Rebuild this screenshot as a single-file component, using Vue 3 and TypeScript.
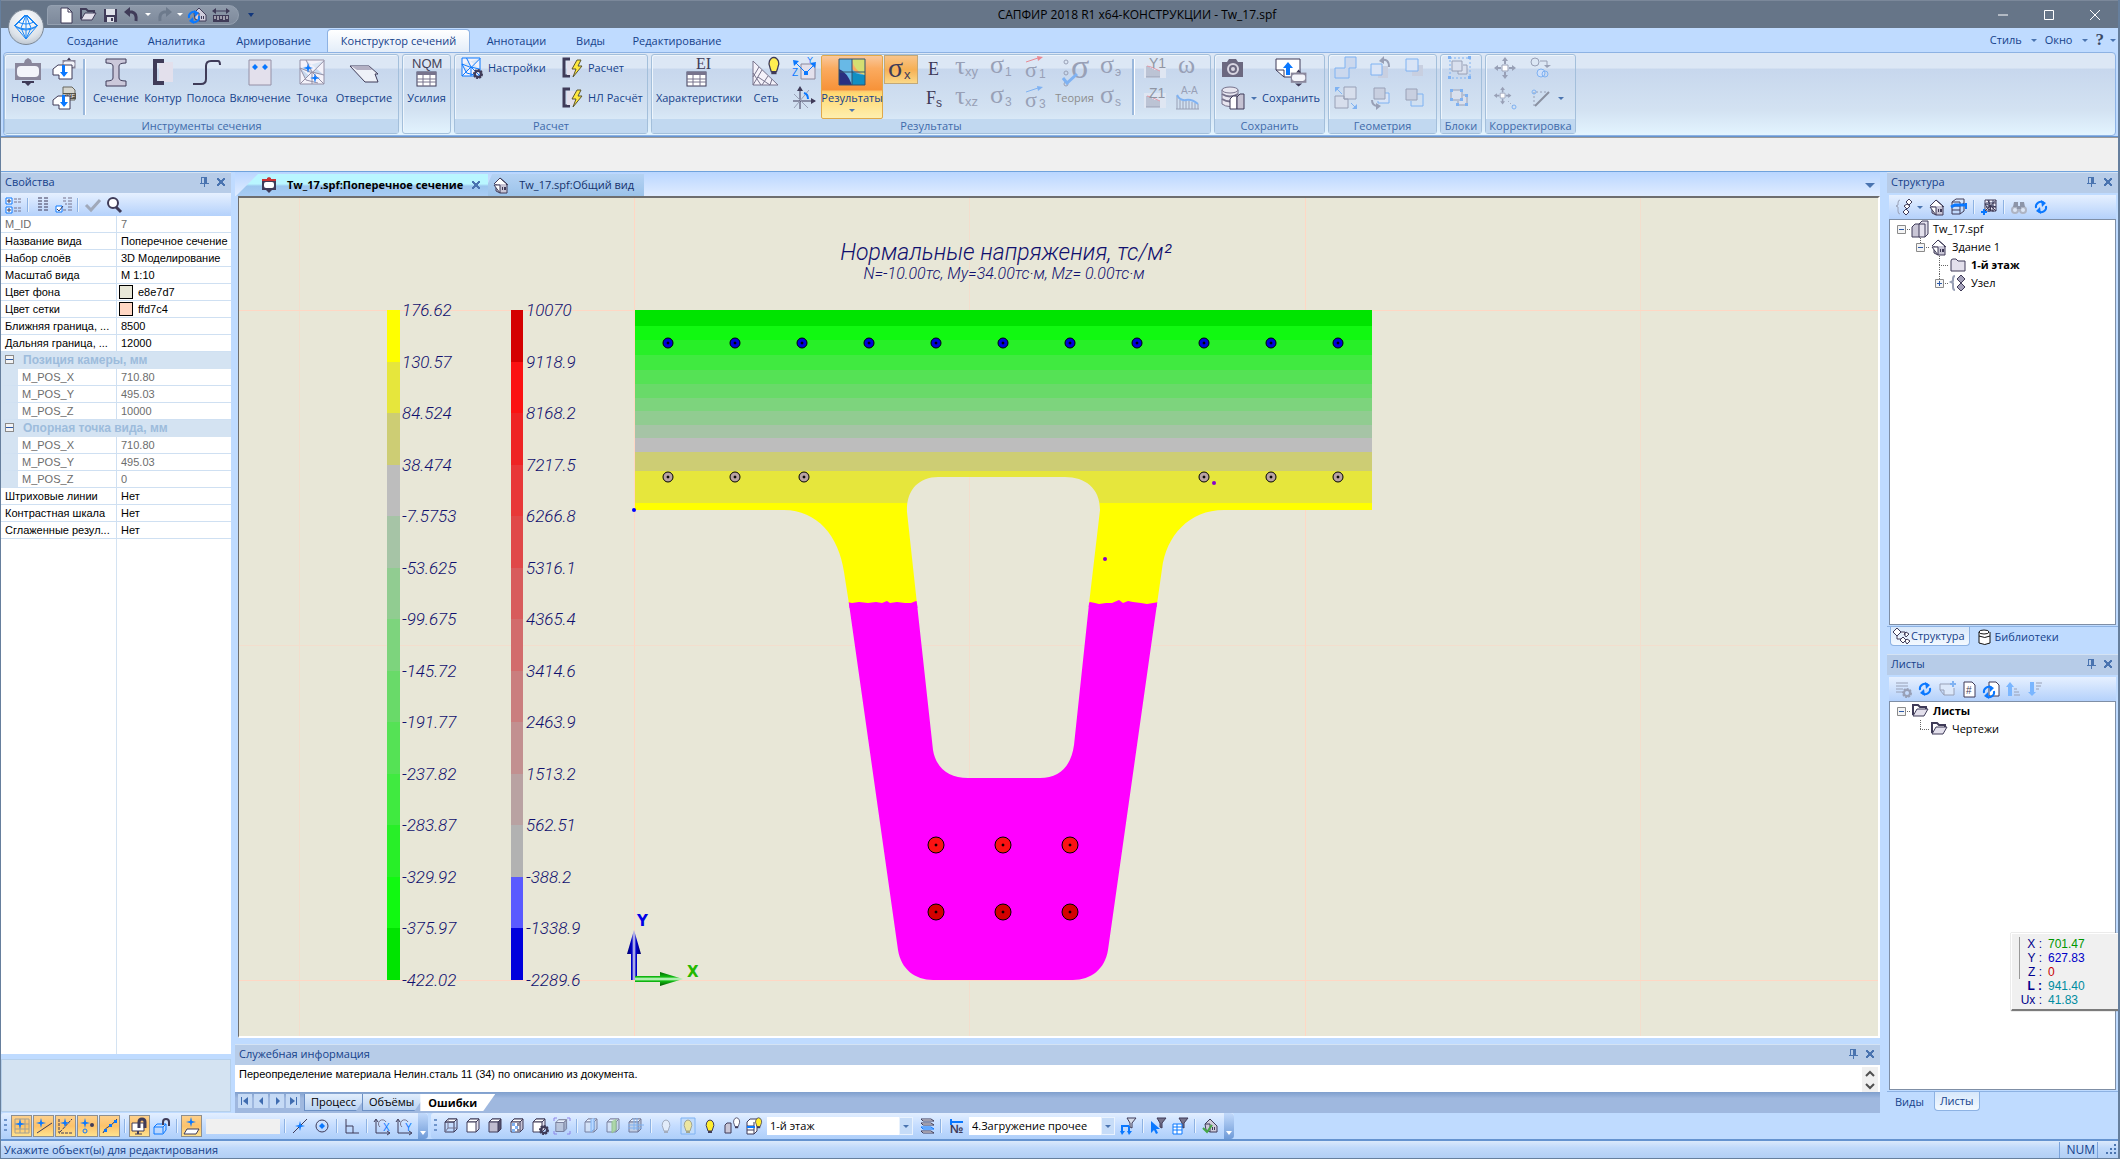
<script setup lang="ts">
import { h, ref } from 'vue'

const D = '#3f3b58'
const B = '#0a78ff'
const L = '#e3e0ec'
const G = '#98a0b6'
const LB = '#7fb2f2'

const stroke = (d: string, c = D, w = 1, fill = 'none', extra = '') =>
  `<path d="${d}" stroke="${c}" stroke-width="${w}" fill="${fill}" ${extra}/>`
const fillp = (d: string, c = D) => `<path d="${d}" fill="${c}"/>`
const txt = (s: string, x: number, y: number, size: number, c = D, extra = '') =>
  `<text x="${x}" y="${y}" font-size="${size}" fill="${c}" font-family="Liberation Sans, sans-serif" ${extra}>${s}</text>`
const serif = 'style="font-family:\'Liberation Serif\',serif"'

const gridTable = (x: number, y: number) =>
  `<rect x="${x}" y="${y}" width="19" height="14" fill="#fff" stroke="${D}"/><rect x="${x}" y="${y}" width="19" height="3" fill="#77738c"/>` +
  stroke(`M${x} ${y + 7}h19M${x} ${y + 10}h19M${x + 6} ${y + 3}v11M${x + 13} ${y + 3}v11`, '#77738c')
const bulb = (x: number, y: number, c: string, s = D) =>
  stroke(`M${x} ${y}a4 5 0 0 1 3 8l-1 3h-4l-1-3a4 5 0 0 1 3-8z`, s, 1, c) + fillp(`M${x - 2} ${y + 11}h4v2h-4z`, s)
const house = (x: number, y: number) =>
  stroke(`M${x} ${y + 6}l5-5 7 7v6h-7v0l-4-2z`, D, 1, '#cfccdb') + stroke(`M${x + 5} ${y + 14}v-8l-5 0`, D) + fillp(`M${x + 7} ${y + 9}h1v3h-1zM${x + 9} ${y + 9}h1v3h-1z`)
const refresh = (x: number, y: number, c = B) =>
  stroke(`M${x + 1} ${y + 7}a5 5 0 0 1 8-5M${x + 11} ${y + 5}a5 5 0 0 1-8 5`, c, 2) +
  fillp(`M${x + 6} ${y - 1}l5 3-4 4zM${x + 6} ${y + 13}l-5-3 4-4z`, c)
const cube = (front: string, side: string, c = D) =>
  stroke('M5 2h9v10l-3 3', c, 1, side) + stroke('M2 5l3-3h9l-3 3z', c, 1, '#fff') + stroke('M2 5h9v10h-9z', c, 1, front) + stroke('M11 5l3-3', c)
const gear = (x: number, y: number, c = D) =>
  `<circle cx="${x}" cy="${y}" r="3" fill="none" stroke="${c}" stroke-width="2"/><circle cx="${x}" cy="${y}" r="4" fill="none" stroke="${c}" stroke-width="2" stroke-dasharray="2 1"/>`
const spark = (x: number, y: number, c = B) => fillp(`M${x} ${y - 5}l1 4 4 1-4 1-1 4-1-4-4-1 4-1z`, c)
const funnel = (x: number, y: number, c: string, f: string) => stroke(`M${x} ${y}h9l-4 5v5l-2-1v-4z`, c, 1, f)
const bolt = (x: number, y: number) => stroke(`M${x + 5} ${y}h4l-3 6h4l-9 11 3-8h-4z`, '#5a5530', 1, '#ffe83d')
const contour = stroke('M10 3h-6v17h6', D, 3) + fillp('M7 5h9v14h-9z', L)
const folder = stroke('M2 13V3h5l2 2h6v2', D, 2) + stroke('M2 14l4-7h11l-4 7z', D, 1, L)
const mesh = (x: number, y: number, s: number, c: string) =>
  stroke(`M${x} ${y}h${s}v${s}h-${s}zM${x} ${y + s / 3}l${s / 2} ${s / 5} ${s / 2}-${s / 2}M${x} ${y + s}l${s / 2}-${s / 2} ${s / 2} ${s / 2}M${x + s / 4} ${y}l${s / 4} ${s / 2} ${s / 2} ${s / 8}M${x} ${y + s / 3}l${s / 4} ${s / 2} ${s / 2} ${s / 8}M${x + s / 2} ${y + s / 2}v${s / 2}`, c, 1, '#f4f2fa')
const section = (c = '#8a879c') => fillp('M3 6h26v17H3z', c) + `<rect x="5" y="9" width="22" height="11" rx="4" fill="#f3f4fa"/>`
const sigma = (s: string, c = G) =>
  txt('σ', 0, 17, 26, c, serif) + txt(s, 15, 20, 12, c)
const chart = (s: string) =>
  `<rect x="1" y="7" width="22" height="15" fill="#dfe6f2"/>` + stroke('M4 21V10M6 21V11M8 21v-9M10 21v-8M12 21v-7M14 21v-7M16 21v-6M3 21h14', G) + stroke('M4 10l4 1 9 4', '#e09aaa') + txt(s, 6, 12, 14, '#8f95a3')
const move = (x: number, y: number, c: string) =>
  stroke(`M${x - 3} ${y - 3}h6v6h-6z`, c, 1, '#fff') + fillp(`M${x} ${y - 11}l3 4h-2v3h-2v-3h-2zM${x} ${y + 11}l3-4h-2v-3h-2v3h-2zM${x - 11} ${y}l4-3v2h3v2h-3v2zM${x + 11} ${y}l-4-3v2h-3v2h3v2z`, c)

type Icon = [number, number, string]
const icons: Record<string, Icon> = {
  pin: [10, 10, fillp('M2 0h6v6h2v1H6v3H5V7H1V6h1zM3 1v5h2V1z', '#4a74b0')],
  doc: [18, 18, stroke('M4 2h7l4 4v11H4z', D, 1, '#fff') + stroke('M11 2v4h4', D)],
  folder: [18, 18, folder],
  save: [18, 18, fillp('M3 3h13v13H3z') + fillp('M5 3h9v6H5z', '#dfe2ea') + fillp('M6 11h7v5H6z', '#dfe2ea') + fillp('M10 12h2v3h-2z')],
  undo: [18, 18, stroke('M5 6h4q5 1 4 9', D, 3) + fillp('M1 6l6-5v10z')],
  redo: [18, 18, stroke('M13 6H9q-5 1-4 9', '#6d7a8c', 3) + fillp('M17 6l-6-5v10z', '#6d7a8c')],
  homeSync: [20, 18, house(7, 1) + refresh(1, 5)],
  ruler: [20, 18, fillp('M2 9h16v7H2z') + stroke('M4 10v3M7 10v4M10 10v3M13 10v4M16 10v3', '#fff') + stroke('M3 5h14', D) + fillp('M1 5l4-3v6zM19 5l-4-3v6z')],
  newSection: [32, 30, section() + fillp('M12 6l1-3 3-2 3 2 1 3z', '#8a879c') + fillp('M10 24h12v2h-3l-3 3-3-3h-3z')],
  importSec: [24, 24, `<g transform="translate(9 1) scale(.5)">${section()}${fillp('M12 6l4-5 4 5zM10 24h12l-6 5z')}</g>` + stroke('M1 13l5-4h14v14H7v-4H1z', D, 1, '#fff') + fillp('M10 9h3v7h3l-4 5-4-5h2z', B)],
  importDxf: [24, 24, stroke('M11 1h9l3 3v10H11z', '#66665e', 1, '#d5d5ce') + fillp('M11 7h13v6H11z', '#55554c') + txt('DXF', 11, 12, 6, '#fff') + stroke('M1 14l5-4h12v13H7v-4H1z', D, 1, '#fff') + fillp('M10 9h3v7h3l-4 5-4-5h2z', B)],
  beam: [32, 30, stroke('M6 2h20v4q-7 0-7 3v12q0 3 7 3v5H6v-5q7 0 7-3V9q0-3-7-3z', D, 1, '#cbc8da')],
  contourBig: [32, 30, fillp('M12 5h14v20H12z', L) + stroke('M17 4h-9v22h9', D, 4)],
  strip: [32, 30, stroke('M3 27h8q5 0 5-5V9q0-5 5-5h7q2 0 2 4', D, 2)],
  inclusion: [32, 30, stroke('M5 3h22v25H5z', '#9490a6', 1, L) + fillp('M11 7l3 3-3 3-3-3zM21 7l3 3-3 3-3-3z', B)],
  point: [32, 30, mesh(4, 3, 24, '#9490a6') + spark(12, 11) + spark(19, 21)],
  hole: [32, 30, stroke('M2 9h19l9 8h-3l3 8H17z', D, 1, '#eef1f8') + fillp('M3 9h18l3 4H9z', '#b3b0c3')],
  nqm: [32, 30, txt('NQM', 1, 11, 13, '#44445a') + gridTable(6, 15)],
  settings: [24, 24, mesh(2, 2, 18, B) + gear(18, 18)],
  calc: [24, 24, contour + bolt(12, 4)],
  ei: [32, 30, txt('EI', 13, 12, 16, D, serif) + gridTable(4, 15)],
  net: [32, 30, stroke('M3 4v24h25zM3 16l8 12M3 28l9-15M8 20l12 8M12 28l6-9M20 28l2-6M3 20l6-10', '#77738c', 1, '#f4f2fa') + `<g transform="translate(-6 -1) scale(1.3)">${bulb(23, 1, '#ffee50')}</g>`],
  axesYZ: [24, 24, stroke('M9 8h14v15H9z', '#8a879c', 1, L) + stroke('M14 17L4 7M14 17l9-9', B, 1) + fillp('M1 4l6 1-5 5zM24 6l-6 1 5 5zM12 15h4v4h-4z', B) + txt('Y', 15, 7, 9, B) + txt('Z', 0, 20, 10, B)],
  axesRot: [24, 24, stroke('M8 23V2M1 15h22', D, 1) + fillp('M8 0l3 5H5zM24 15l-5-3v6z') + stroke('M2 8l14 14M2 22L17 4', G, 1) + stroke('M16 13q0-5-4-6', B, 2)],
  results: [32, 30, '<path d="M3 2h13v10q2 3 13 6V28H3z" fill="#68b9e6"/><path d="M3 12q8 3 13 16H3z" fill="#2a2f80"/><path d="M16 14q3 3 13 4v10H16z" fill="#118fc2"/><path d="M16 2h13v16q-11-4-13-16z" fill="#d4df72"/>' + stroke('M3 2h26v26H3zM16 2v26M3 15h26', '#33506a')],
  sigmaX: [26, 24, txt('σ', 0, 19, 28, D, serif) + txt('x', 16, 21, 13)],
  E: [24, 24, txt('E', 6, 19, 18, D, serif)],
  Fs: [24, 24, txt('F', 4, 18, 18, D, serif) + txt('s', 14, 21, 12)],
  txy: [26, 24, txt('τ', 1, 18, 26, G, serif) + txt('xy', 11, 20, 13, G)],
  txz: [26, 24, txt('τ', 1, 18, 26, G, serif) + txt('xz', 11, 20, 13, G)],
  s1: [24, 24, sigma('1')],
  s3: [24, 24, sigma('3')],
  s1a: [24, 24, txt('σ', 1, 21, 22, G, serif) + txt('1', 15, 22, 12, G) + stroke('M2 6l12-4', '#e98a94') + fillp('M19 1l-6-1 1 5z', '#e98a94')],
  s3a: [24, 24, txt('σ', 1, 21, 22, G, serif) + txt('3', 15, 22, 12, G) + stroke('M2 6l12-4', LB) + fillp('M19 1l-6-1 1 5z', LB)],
  theory: [32, 30, txt('σ', 12, 21, 34, G, serif) + '<circle cx="7" cy="5" r="2" fill="none" stroke="#98a0b6"/><circle cx="7" cy="16" r="2" fill="none" stroke="#98a0b6"/><circle cx="7" cy="27" r="2" fill="none" stroke="#98a0b6"/>' + stroke('M4 21l4 5 10-9', LB, 3)],
  sE: [24, 24, sigma('э')],
  sS: [24, 24, sigma('s')],
  y1: [24, 24, chart('Y1')],
  z1: [24, 24, chart('Z1')],
  omega: [24, 24, txt('ω', 3, 17, 26, G, serif)],
  aa: [24, 24, txt('A-A', 6, 8, 10, G) + stroke('M2 23V10M5 23v-9M8 23v-8M11 23v-8M14 23v-8M17 23v-7M20 23v-6M23 23v-5M1 23h23', G) + stroke('M2 9q3 6 9 5t12 4', LB, 2)],
  camera: [24, 24, fillp('M2 6h5l2-3h7l2 3h5v15H2z', '#6b6880') + '<circle cx="13" cy="13" r="5" fill="none" stroke="#d8d6e2" stroke-width="2"/><circle cx="13" cy="13" r="2" fill="#d8d6e2"/>'],
  db: [26, 24, '<path d="M2 4v14q7 5 16 0V4" fill="#e8e6f0" stroke="#77738c"/><ellipse cx="10" cy="4" rx="8" ry="3" fill="#e8e6f0" stroke="#77738c"/>' + stroke('M2 8q8 5 16 0M2 13q8 5 16 0', '#77738c', 2) + stroke('M10 13l3-3h4v13h-7z', D, 1, '#fff') + stroke('M17 11l3-3h4v15h-7z', D, 1, '#c5c2d2')],
  saveBig: [32, 30, stroke('M1 2h24v18H9l-8-7zM1 13h8v7', D, 1, '#fff') + fillp('M13 5l5 6h-3v7h-4v-7H8z', B) + `<g transform="translate(14 12) scale(.6)">${section('#8a879c')}${fillp('M12 6l4-5 4 5zM10 24h12l-6 5z')}</g>`],
  union: [24, 24, stroke('M11 1h11v11h-7v10H1V12h10z', LB, 1, '#cbd8ee')],
  diff: [24, 24, stroke('M10 1h12v12H10zM1 10h9v3h4v9H1z', G, 1, '#d7deec') + stroke('M8 8L2 2M17 17l5 5', LB) + fillp('M1 1h5l-5 5zM23 23h-5l5-5z', LB)],
  rotateUp: [24, 24, fillp('M9 10h10v12H9z', '#c8cfe0') + stroke('M2 8h11v11H2z', LB, 1, '#d9e4f6') + stroke('M12 4q8-2 8 7', G, 2) + fillp('M10 5l5-5v8z', G)],
  rotateDown: [24, 24, stroke('M15 7h5v10H9v-2', LB, 1, '#d9e4f6') + stroke('M5 2h11v11H5z', G, 1, '#c8cfe0') + stroke('M3 14q0 6 6 6', G, 2) + fillp('M12 20l-5-3v7z', G)],
  front: [24, 24, fillp('M9 9h11v11H9z', '#c8cfe0') + stroke('M3 3h12v12H3z', LB, 1, '#d9e4f6')],
  back: [24, 24, stroke('M14 8h6v12H8v-5', LB) + stroke('M3 3h11v11H3z', G, 1, '#c8cfe0')],
  block: [24, 24, stroke('M2 2h20v20H2z', LB, 1, 'none', 'stroke-dasharray="2 2"') + stroke('M4 5h10v10H4zM15 9h4v9h-9v-3', G, 1, '#d9e0ee') + fillp('M0 0h3v3H0zM20 0h3v3h-3zM0 20h3v3H0zM20 20h3v3h-3z', LB)],
  unblock: [24, 24, stroke('M3 4h11v10H3zM15 9h4v10h-9v-4', G, 1, '#d9e0ee') + fillp('M2 3h3v3H2zM12 3h3v3h-3zM2 12h3v3H2zM17 8h3v3h-3zM8 17h3v3H8zM17 17h3v3h-3zM12 12h3v3h-3z', LB)],
  move: [24, 24, move(12, 12, G)],
  moveTo: [24, 24, `<g transform="scale(.8)">${move(12, 12, G)}</g>` + stroke('M15 15l5 5', G, 1, 'none', 'stroke-dasharray="1 2"') + '<circle cx="21" cy="21" r="2" fill="none" stroke="#7fb2f2"/>'],
  copyRot: [24, 24, '<circle cx="6" cy="6" r="4" fill="none" stroke="#98a0b6"/><circle cx="12" cy="17" r="4" fill="#cfe0fa" stroke="#7fb2f2"/><circle cx="16" cy="18" r="3" fill="none" stroke="#7fb2f2"/>' + stroke('M11 5h7v5', G) + fillp('M15 9h7l-4 3z', G)],
  angle: [24, 24, stroke('M5 20V6h12', G, 1, 'none', 'stroke-dasharray="2 2"') + stroke('M6 20L20 6', '#8a90a0', 2) + '<circle cx="5" cy="6" r="2" fill="none" stroke="#7fb2f2"/>'],
  tree: [18, 18, stroke('M1 2h6v6H1zM1 11h6v6H1z', B, 1, '#fff') + stroke('M2 5h4M4 3v4M2 14h4M4 12v4', D) + stroke('M9 3h8M9 6h8M9 12h8M9 15h8', '#77738c', 1, 'none', 'stroke-dasharray="3 1"')],
  list: [18, 18, stroke('M4 2h4M4 5h4M4 8h4M4 11h4M4 14h4M10 2h4M10 5h4M10 8h4M10 11h4M10 14h4', D)],
  checkList: [18, 18, stroke('M1 10h6v6H1z', B, 1, '#fff') + stroke('M2 13l2 2 4-5', D) + stroke('M8 2h3M8 5h3M10 8h2M8 14h3M13 2h4M13 5h4M13 8h4M13 11h4M13 14h4', '#77738c')],
  check: [18, 18, stroke('M2 9l5 5 9-10', '#a0a9ba', 3)],
  search: [18, 18, '<circle cx="8" cy="7" r="5" fill="#fff" stroke="#3f3b58" stroke-width="2"/>' + stroke('M11 11l5 5', D, 3)],
  struct: [18, 18, stroke('M6 2q-2 0-2 3v2l-2 1 2 1v4q0 3 2 3', G, 1) + stroke('M12 4l3-3 3 3-3 3zM9 14l3-3 3 3-3 3zM10 8l3-2 3 2-3 3z', D, 1, '#fff')],
  node: [18, 18, stroke('M6 2q-2 0-2 3v2l-2 1 2 1v4q0 3 2 3', G, 2) + stroke('M8 5l4-4 4 4-4 4zM8 13l4-4 4 4-4 4z', D, 1, '#a5a2ba')],
  house: [18, 18, `<path d="M4 8v7l4 2h7V9L8 2z" fill="#c9c6d6" stroke="${D}"/>` + stroke('M2 8l6-6 7 6M8 17V9H2z', D, 1, '#fff') + stroke('M8 2l8 7', D) + fillp('M10 11h1v3h-1zM12 11h2v3h-2z')],
  floors: [18, 18, stroke('M2 4l4-3h8v12l-4 3H2zM2 8h8M2 12h8M10 4v12M10 4H2M14 5l-4 3', D) + stroke('M1 9l4-2h11', B, 3) + fillp('M15 5h2v6h-2z', B)],
  meshAdd: [18, 18, mesh(5, 2, 11, D) + stroke('M6 5h10M6 9h10M9 2v12M13 2v12', D) + stroke('M1 14h6M4 11v6', B, 2)],
  binoc: [18, 18, '<circle cx="5" cy="12" r="4" fill="#aeb4c3"/><circle cx="13" cy="12" r="4" fill="#aeb4c3"/>' + fillp('M4 4h4v5H3zM10 4h4l1 5h-5zM7 8h4v3H7z', '#8d95a8') + '<circle cx="5" cy="12" r="2" fill="#dce6f6"/><circle cx="13" cy="12" r="2" fill="#dce6f6"/>'],
  refresh: [18, 18, refresh(3, 3)],
  building: [18, 18, stroke('M1 7l3-3h5v13H1z', D, 1, '#c9c6d6') + stroke('M8 4l3-3h6v13l-3 3H8z', D, 1, '#e3e0ec') + stroke('M14 17V4H8', D, 1)],
  floor: [18, 18, stroke('M2 15V5q0-2 2-2h3l2 2h7v10z', D, 1, L)],
  structTab: [18, 18, stroke('M1 5l4-4 4 4-4 4zM5 9v3h4M8 5h5v3M8 13l3-3 3 3-3 3zM13 14l2-2 3 2-3 3zM12 7l2-2 3 2-3 3z', D, 1, '#fff')],
  lib: [18, 18, '<path d="M3 4v11q6 3 11 0V4" fill="#fff" stroke="#111" stroke-width="1"/><ellipse cx="8" cy="4" rx="5" ry="2" fill="#fff" stroke="#111"/>' + stroke('M3 8q6 3 11 0', '#111', 1)],
  sheetCfg: [18, 18, stroke('M2 3h12M2 6h12M2 9h7M2 12h6', G, 1) + gear(13, 13, G)],
  sheetAdd: [18, 18, stroke('M13 4H2v6l4 5h10V8M2 10h4v5', G, 1, '#dce8fa') + stroke('M12 4h6M15 1v6', LB, 2)],
  sheetNum: [18, 18, stroke('M4 2h8l3 3v12H4z', D, 1, '#fff') + txt('#', 6, 14, 10)],
  sheetSync: [18, 18, stroke('M7 2h7l3 3v11H7z', D, 1, '#fff') + refresh(1, 6)],
  up: [18, 18, fillp('M6 2l4 5H8v9H4V7H2z', '#7ab6ff') + stroke('M10 9h3M10 12h5M10 15h6', G)],
  down: [18, 18, fillp('M6 16l4-4H8V2H4v10H2z', '#7ab6ff') + stroke('M10 3h6M10 6h5M10 9h3', G)],
  snapGrid: [18, 18, stroke('M2 2h14v14H2zM7 2v14M12 2v14M2 7h14M2 12h14', '#a29f92') + spark(7, 7)],
  snapLine: [18, 18, stroke('M2 16L17 6', D) + spark(6, 6)],
  snapMid: [18, 18, stroke('M2 2v14h14M3 15L15 2', D, 1, 'none', 'stroke-dasharray="3 1"') + spark(8, 6)],
  snapPt: [18, 18, spark(6, 6) + '<circle cx="6" cy="14" r="2" fill="none" stroke="#0a78ff"/><circle cx="13" cy="8" r="2" fill="#3f3b58"/>'],
  snapCurve: [18, 18, stroke('M2 16q2-5 5-6t9-8', D) + fillp('M3 12h3v3H3zM8 7h3v3H8zM13 3h3v3h-3z', B)],
  magnetMon: [18, 18, stroke('M1 6h12v8H1zM4 17h7', D, 1, '#fff') + stroke('M8 11V5q0-3 3-3t3 3v6', D, 3) + fillp('M6 14h2v3H6z')],
  magnetBox: [18, 18, stroke('M1 10l3-3h9v6l-3 4H1zM1 10h9v6M10 10l3-3', B) + stroke('M10 8V5q0-3 3-3t3 3v4', D, 2)],
  plane: [18, 18, stroke('M4 12h12l-3 5H1z', D, 1, '#fff') + spark(8, 5)],
  slash: [18, 18, stroke('M2 16L16 2', D) + spark(9, 9)],
  circle: [18, 18, `<circle cx="9" cy="9" r="6" fill="none" stroke="${D}"/>` + fillp('M9 6l3 3-3 3-3-3z', B)],
  ortho: [18, 18, stroke('M3 2v14h13M3 9h7v7', D)],
  rotX: [18, 18, stroke('M3 3v13h13M1 5l2-3 2 3M14 14l3 2-3 2', D) + stroke('M7 10a4 4 0 1 1 6-5', '#77738c', 1) + txt('X', 10, 14, 10, B)],
  rotY: [18, 18, stroke('M3 3v13h13M1 5l2-3 2 3M14 14l3 2-3 2', D) + stroke('M7 10a4 4 0 1 1 6-5', '#77738c', 1) + txt('Y', 10, 14, 10, B)],
  cubeWire: [18, 18, cube('none', 'none') + stroke('M5 2v9h9M5 11l-3 4', '#77738c')],
  cubeWhite: [18, 18, cube('#fff', '#e3e0ec')],
  cubeDark: [18, 18, cube('#c0bdcf', '#56526c')],
  cubeTex: [18, 18, cube('#fff', '#c8c5d6') + fillp('M3 6h3v3H3zM6 9h3v3H6zM3 12h3v3H3z', LB) + fillp('M8 6h3v3H8zM8 12h3v3H8z', '#8a8799')],
  cubeGear: [18, 18, cube('#fff', '#e3e0ec') + gear(13, 13)],
  cubeSel: [18, 18, `<g opacity=".6" transform="translate(1 1) scale(.9)">${cube('#b4b7c6', '#8d93a5')}</g>` + stroke('M1 4V1h3M14 1h3v3M17 14v3h-3M4 17H1v-3', '#8c84e8')],
  cutB: [18, 18, `<g opacity=".55">${cube('#dfe6f2', '#c8cfdd')}</g>` + stroke('M8 2v13l3-3V1', LB, 1, '#b9d8ff')],
  cutG: [18, 18, `<g opacity=".55">${cube('#dfe6f2', '#c8cfdd')}</g>` + stroke('M7 4v12l4-3V2', '#93bf93', 1, '#add6a9')],
  cutGrid: [18, 18, `<g opacity=".6">${cube('#c2c8d6', '#a5adbd')}</g>` + stroke('M1 8h16M1 11h14M7 1v12M10 1v12', LB)],
  bulbOff: [18, 18, bulb(9, 3, '#e2ecfa', '#a3adbf')],
  bulbBox: [18, 18, stroke('M2 1h14v16H2z', LB, 1, '#c2dcfb') + bulb(9, 3, '#ece6a0', '#a3a68f')],
  bulbOn: [18, 18, bulb(9, 3, '#ffee30')],
  bulbBld: [18, 18, stroke('M2 8l2-2h4v10H2z', D, 1, '#c9c6d6') + `<g transform="translate(4 0) scale(.8)">${bulb(12, 1, '#fff')}</g>`],
  bulbFl: [18, 18, stroke('M2 5l3-3h7v12l-3 3H2zM2 9h7M2 13h7M9 5v12', D, 1, '#fff') + stroke('M2 10h8', B, 2) + `<g transform="translate(4 0) scale(.8)">${bulb(12, 1, '#ffee30')}</g>`],
  layers: [18, 18, stroke('M4 2h10l3 2H6zM4 6h10l3 2H6zM4 14h10l3 2H6z', D, 1, '#fff') + stroke('M4 10h10l3 2H6z', B, 1, '#b9d8ff')],
  loadNo: [18, 18, txt('№', 3, 16, 12, D, 'font-weight="700"') + stroke('M3 5h13M4 2v6', B, 2)],
  filterLoad: [18, 18, funnel(8, 1, D, '#d5dbe8') + stroke('M3 8v8M10 9v7M3 9h7', B, 2) + fillp('M1 14h5l-3 4zM8 14h5l-3 4z', B)],
  filterSel: [18, 18, funnel(8, 1, D, '#77738c') + fillp('M2 4v12l3-3 2 4 2-1-2-4h4z', B)],
  filterTab: [18, 18, funnel(8, 1, D, '#77738c') + stroke('M2 7h9v10H2zM2 10h9M2 13h9M6 7v10', B, 1, '#fff')],
  houseCheck: [18, 18, house(4, 1) + stroke('M2 11l4 4 5-7', '#45a845', 2)],
  tabSec: [18, 18, fillp('M2 4h14v10H2z') + '<rect x="4" y="6" width="10" height="6" rx="2" fill="#fff"/>' + stroke('M2 4h14', '#c33', 2) + fillp('M7 2l2-1 2 1v2H7z', '#c33') + fillp('M6 14h6l-3 3z')],
}
const Ico = (p: { n: string }) => {
  const [w, hh, m] = icons[p.n]
  return h('svg', { width: w, height: hh, viewBox: `0 0 ${w} ${hh}`, 'aria-hidden': 'true', innerHTML: m })
}
Ico.props = ['n']

type Item = { i: string; t?: string; arrow?: boolean; on?: boolean }
type Col = { k: 'big' | 'pair' | 'drop' | 'rows' | 'sep' | 'split'; w: number; items: Item[]; off?: boolean }
const big = (w: number, i: string, t: string, off = false): Col => ({ k: 'big', w, items: [{ i, t }], off })
const pair = (w: number, a: string, b?: string): Col => ({ k: 'pair', w, items: b ? [{ i: a }, { i: b }] : [{ i: a }] })
const sep = (w: number): Col => ({ k: 'sep', w, items: [] })
const groups: { t: string; w: number; cols: Col[] }[] = [
  { t: 'Инструменты сечения', w: 395, cols: [big(46, 'newSection', 'Новое'), pair(26, 'importSec', 'importDxf'), sep(15), big(48, 'beam', 'Сечение'), big(46, 'contourBig', 'Контур'), big(40, 'strip', 'Полоса'), big(68, 'inclusion', 'Включение'), big(36, 'point', 'Точка'), big(68, 'hole', 'Отверстие')] },
  { t: '', w: 49, cols: [big(47, 'nqm', 'Усилия')] },
  { t: 'Расчет', w: 194, cols: [{ k: 'rows', w: 100, items: [{ i: 'settings', t: 'Настройки' }] }, { k: 'rows', w: 92, items: [{ i: 'calc', t: 'Расчет' }, { i: 'calc', t: 'НЛ Расчёт' }] }] },
  { t: 'Результаты', w: 560, cols: [big(94, 'ei', 'Характеристики'), big(40, 'net', 'Сеть'), pair(35, 'axesYZ', 'axesRot'), { k: 'split', w: 62, items: [{ i: 'results', t: 'Результаты' }] }, { k: 'pair', w: 35, items: [{ i: 'sigmaX', on: true }] }, pair(32, 'E', 'Fs'), pair(34, 'txy', 'txz'), pair(35, 's1', 's3'), pair(34, 's1a', 's3a'), big(43, 'theory', 'Теория', true), pair(31, 'sE', 'sS'), sep(12), pair(31, 'y1', 'z1'), pair(34, 'omega', 'aa')] },
  { t: 'Сохранить', w: 111, cols: [{ k: 'drop', w: 44, items: [{ i: 'camera' }, { i: 'db', arrow: true }] }, big(64, 'saveBig', 'Сохранить')] },
  { t: 'Геометрия', w: 109, cols: [pair(34, 'union', 'diff'), pair(35, 'rotateUp', 'rotateDown'), pair(34, 'front', 'back')] },
  { t: 'Блоки', w: 42, cols: [pair(38, 'block', 'unblock')] },
  { t: 'Корректировка', w: 91, cols: [pair(38, 'move', 'moveTo'), { k: 'drop', w: 46, items: [{ i: 'copyRot' }, { i: 'angle', arrow: true }] }] },
]
const tabs = [
  { t: 'Создание', w: 81 }, { t: 'Аналитика', w: 87 }, { t: 'Армирование', w: 107 }, { t: 'Конструктор сечений', w: 143 },
  { t: 'Аннотации', w: 93 }, { t: 'Виды', w: 55 }, { t: 'Редактирование', w: 118 },
]
const activeTab = ref(3)

type Prop = { n: string; v?: string; c?: string; ro?: boolean; group?: boolean; child?: boolean }
const props: Prop[] = [
  { n: 'M_ID', v: '7', ro: true }, { n: 'Название вида', v: 'Поперечное сечение' }, { n: 'Набор слоёв', v: '3D Моделирование' },
  { n: 'Масштаб вида', v: 'M 1:10' }, { n: 'Цвет фона', v: 'e8e7d7', c: '#e8e7d7' }, { n: 'Цвет сетки', v: 'ffd7c4', c: '#ffd7c4' },
  { n: 'Ближняя граница, ...', v: '8500' }, { n: 'Дальняя граница, ...', v: '12000' },
  { n: 'Позиция камеры, мм', group: true }, { n: 'M_POS_X', v: '710.80', ro: true, child: true }, { n: 'M_POS_Y', v: '495.03', ro: true, child: true }, { n: 'M_POS_Z', v: '10000', ro: true, child: true },
  { n: 'Опорная точка вида, мм', group: true }, { n: 'M_POS_X', v: '710.80', ro: true, child: true }, { n: 'M_POS_Y', v: '495.03', ro: true, child: true }, { n: 'M_POS_Z', v: '0', ro: true, child: true },
  { n: 'Штриховые линии', v: 'Нет' }, { n: 'Контрастная шкала', v: 'Нет' }, { n: 'Сглаженные резул...', v: 'Нет' },
]

const greens = ['#ffff00', '#e6e63c', '#cdcd74', '#bdbdbd', '#a6c4a6', '#91cc91', '#7dd47d', '#69da69', '#55e255', '#40ea40', '#28ef28', '#11f911', '#00e400']
const reds = ['#d40000', '#fb1212', '#ee2424', '#e83838', '#e04848', '#d85c5c', '#d26c6c', '#ca7e7e', '#c29090', '#b9a2a2', '#b2b2b2', '#5a5aff', '#0000dc']
const legends = [
  { x: 148, w: 13, tx: 163, colors: greens, labels: ['176.62', '130.57', '84.524', '38.474', '-7.5753', '-53.625', '-99.675', '-145.72', '-191.77', '-237.82', '-283.87', '-329.92', '-375.97', '-422.02'] },
  { x: 272, w: 12, tx: 287, colors: reds, labels: ['10070', '9118.9', '8168.2', '7217.5', '6266.8', '5316.1', '4365.4', '3414.6', '2463.9', '1513.2', '562.51', '-388.2', '-1338.9', '-2289.6'] },
]
const stepY = (k: number) => Math.round(112 + (k * 670) / 13)
const bandEdges = [112, 128, 142, 157, 172, 186, 200, 213, 227, 240, 254, 273, 305, 406]
const bands = bandEdges.slice(0, -1).map((y, k) => ({ y, h: bandEdges[k + 1] - y, c: greens[12 - k] }))
const topBars = Array.from({ length: 11 }, (_, k) => 429 + k * 67)
const lowBars = [429, 496, 565, 965, 1032, 1099]
const redBars = [697, 764, 831]

const coords = [
  { k: 'X', v: '701.47', c: '#009600' }, { k: 'Y', v: '627.83', c: '#0000c8' }, { k: 'Z', v: '0', c: '#c80000' },
  { k: 'L', v: '941.40', c: '#008ca0', b: true }, { k: 'Ux', v: '41.83', c: '#008ca0' },
]
const floorSel = ref('1-й этаж')
const loadSel = ref('4.Загружение прочее')
const bar1 = ['+snapGrid', '+snapLine', '+snapMid', '+snapPt', '+snapCurve', '|', '+magnetMon', 'magnetBox', '|', '+plane', '_', '|', 'slash', 'circle', '|', 'ortho', '|', 'rotX', 'rotY']
const bar2 = ['cubeWire', 'cubeWhite', 'cubeDark', 'cubeTex', 'cubeGear', 'cubeSel', '|', 'cutB', 'cutG', 'cutGrid', '|', 'bulbOff', 'bulbBox', 'bulbOn', 'bulbBld', 'bulbFl']
const structTree = [
  { l: 0, b: '-', i: 'building', t: 'Tw_17.spf' }, { l: 1, b: '-', i: 'house', t: 'Здание 1' },
  { l: 2, b: '', i: 'floor', t: '1-й этаж', bold: true, more: true }, { l: 2, b: '+', i: 'node', t: 'Узел' },
]
const sheetTree = [{ l: 0, b: '-', i: 'folder', t: 'Листы', bold: true }, { l: 1, b: '', i: 'folder', t: 'Чертежи' }]
</script>

<template>
  <div class="app">
    <header class="title">
      <button class="orb" aria-label="Меню">
        <svg width="26" height="28" viewBox="0 0 26 28" fill="none" stroke="#1a86f5" stroke-width="1">
          <path d="M13 2L2 13l11 13 11-13zM2 13q11 6 22 0M5 9q8 4 16 0M13 2L8 15l5 11 5-11zM13 2v24M3 14q10 6 20 0M12 2L1 13M14 2l11 11" />
        </svg>
      </button>
      <div class="qat">
        <button aria-label="Новый"><Ico n="doc" /></button>
        <button aria-label="Открыть"><Ico n="folder" /></button>
        <button aria-label="Сохранить"><Ico n="save" /></button>
        <button aria-label="Отменить"><Ico n="undo" /></button>
        <i class="tri pale" />
        <button aria-label="Вернуть"><Ico n="redo" /></button>
        <i class="tri pale" />
        <button aria-label="Обновить"><Ico n="homeSync" /></button>
        <button aria-label="Измерить"><Ico n="ruler" /></button>
      </div>
      <button class="more" aria-label="Настройка панели"><i class="tri" /></button>
      <h1>САПФИР 2018 R1 x64-КОНСТРУКЦИИ - Tw_17.spf</h1>
      <div class="wctl">
        <button aria-label="Свернуть"><svg width="10" height="10"><path d="M0 5h10" stroke="#fff" /></svg></button>
        <button aria-label="Развернуть"><svg width="10" height="10"><path d="M.5 .5h9v9h-9z" stroke="#fff" fill="none" /></svg></button>
        <button aria-label="Закрыть"><svg width="10" height="10"><path d="M0 0l10 10M10 0L0 10" stroke="#fff" /></svg></button>
      </div>
    </header>

    <nav class="tabs">
      <button v-for="(t, k) in tabs" :key="t.t" class="tab" :class="{ on: k === activeTab }" :style="{ width: t.w + 'px' }" @click="activeTab = k">{{ t.t }}</button>
      <span class="grow" />
      <button class="menu">Стиль <i class="tri" /></button>
      <button class="menu">Окно <i class="tri" /></button>
      <button class="menu help">? <i class="tri" /></button>
    </nav>

    <div class="ribbonwrap">
      <div class="ribbon">
        <section v-for="(g, gi) in groups" :key="gi" class="group" :style="{ width: g.w + 'px' }">
          <div class="gbody">
            <template v-for="(c, ci) in g.cols" :key="ci">
              <i v-if="c.k === 'sep'" class="vsep" :style="{ width: c.w + 'px' }" />
              <button v-else-if="c.k === 'big'" class="big" :class="{ off: c.off }" :style="{ width: c.w + 'px' }">
                <Ico :n="c.items[0].i" /><span>{{ c.items[0].t }}</span>
              </button>
              <button v-else-if="c.k === 'split'" class="big split" :style="{ width: c.w + 'px' }">
                <Ico :n="c.items[0].i" /><span>{{ c.items[0].t }}</span><i class="tri" />
              </button>
              <div v-else class="col" :class="c.k" :style="{ width: c.w + 'px' }">
                <button v-for="(it, k) in c.items" :key="k" :class="{ on: it.on }" :aria-label="it.t || it.i">
                  <Ico :n="it.i" /><span v-if="it.t">{{ it.t }}</span><i v-if="it.arrow" class="tri" />
                </button>
              </div>
            </template>
          </div>
          <footer v-if="g.t">{{ g.t }}</footer>
        </section>
      </div>
    </div>
    <div class="blank" />

    <main class="work">
      <aside class="left">
        <div class="phead"><h2>Свойства</h2><Ico n="pin" class="pin" /><span class="cls" /></div>
        <div class="ptools props">
          <button aria-label="Дерево"><Ico n="tree" /></button><i class="bsep" />
          <button aria-label="Список"><Ico n="list" /></button><button aria-label="Выбор"><Ico n="checkList" /></button><i class="bsep" />
          <button aria-label="Применить"><Ico n="check" /></button><button aria-label="Найти"><Ico n="search" /></button>
        </div>
        <div class="plist">
          <table>
            <colgroup><col class="c1" /><col /></colgroup>
            <tbody>
              <tr v-for="(p, k) in props" :key="k" :class="{ ro: p.ro, grp: p.group, child: p.child }">
                <th v-if="p.group" colspan="2"><i class="box" />{{ p.n }}</th>
                <template v-else>
                  <td>{{ p.n }}</td>
                  <td><i v-if="p.c" class="sw" :style="{ background: p.c }" />{{ p.v }}</td>
                </template>
              </tr>
            </tbody>
          </table>
        </div>
        <div class="desc" />
      </aside>

      <section class="center">
        <div class="dtabs">
          <button class="dtab on"><Ico n="tabSec" /><span>Tw_17.spf:Поперечное сечение</span><i class="cls" /></button>
          <button class="dtab"><Ico n="house" /><span>Tw_17.spf:Общий вид</span></button>
          <span class="grow" /><i class="tri wide" />
        </div>
        <div class="canvas">
          <svg class="plot" width="100%" height="100%">
            <g stroke="#ffd7c4" shape-rendering="crispEdges">
              <path d="M0 112H1640M0 782H1640M395 0V838M1066 0V838" />
              <path d="M60 0V838M730 0V838M1401 0V838M0 447H1640" opacity=".5" />
            </g>
            <g v-for="l in legends" :key="l.x">
              <rect v-for="(c, k) in l.colors" :key="k" :x="l.x" :y="stepY(k)" :width="l.w" :height="stepY(k + 1) - stepY(k)" :fill="c" />
              <text v-for="(t, k) in l.labels" :key="t" class="lab" :x="l.tx" :y="stepY(k) + 6">{{ t }}</text>
            </g>
            <text class="cap" x="767" y="62" text-anchor="middle">Нормальные напряжения, тс/м²</text>
            <text class="sub" x="765" y="81" text-anchor="middle">N=-10.00тс, My=34.00тс·м, Mz= 0.00тс·м</text>
            <clipPath id="body">
              <path clip-rule="evenodd" d="M396 112H1133V312H985C950 312 927 338 923 371L918 406 869 752C866 771 852 782 834 782H694C676 782 662 771 659 752L610 406 605 374C600 338 578 312 545 312H396zM699 279H826C846 279 861 290 861 312L850 406 835 547C832 569 820 580 801 580H729C710 580 697 570 694 552L678 406 668 314C667 292 680 279 699 279z" />
            </clipPath>
            <g clip-path="url(#body)">
              <rect x="396" y="406" width="737" height="377" fill="#f0f" />
              <rect v-for="b in bands" :key="b.y" x="396" :y="b.y" width="737" :height="b.h" :fill="b.c" />
              <path fill="#f0f" d="M605 406l3-2 5 1 7-1 9 1 8-1 6 1 5-2 3 2 7-1 8 1 6 0 5-2 4 2 3-1v6h-79zM848 406l3-2 5 1 4 1 7-1 6 0 7-3 4 3 5-2 5 1 8 1 6 1 6-1 6-1v5h-72z" />
            </g>
            <g stroke="#000">
              <g v-for="x in topBars" :key="'t' + x"><circle :cx="x" cy="145" r="5" fill="#0000dc" /><circle :cx="x" cy="145" r="1" /></g>
              <g v-for="x in lowBars" :key="'l' + x"><circle :cx="x" cy="279" r="5" fill="#b9a2a2" /><circle :cx="x" cy="279" r="1" /></g>
              <g v-for="x in redBars" :key="'r' + x">
                <circle :cx="x" cy="647" r="8" fill="#fb1212" /><circle :cx="x" cy="647" r="1" />
                <circle :cx="x" cy="714" r="8" fill="#d40000" /><circle :cx="x" cy="714" r="1" />
              </g>
            </g>
            <circle cx="395" cy="312" r="2" fill="#00f" /><circle cx="975" cy="285" r="2" fill="#80c" /><circle cx="866" cy="361" r="2" fill="#80c" />
            <defs>
              <linearGradient id="ay"><stop offset="0" stop-color="#006" /><stop offset=".35" stop-color="#00c" /><stop offset=".5" stop-color="#dde" /><stop offset=".65" stop-color="#00c" /><stop offset="1" stop-color="#006" /></linearGradient>
              <linearGradient id="ax" x2="0" y2="1"><stop offset="0" stop-color="#060" /><stop offset=".35" stop-color="#1b1" /><stop offset=".5" stop-color="#dfd" /><stop offset=".65" stop-color="#1b1" /><stop offset="1" stop-color="#050" /></linearGradient>
            </defs>
            <path d="M392 755h6v27h-6zM388 756l7-24 7 24z" fill="url(#ay)" />
            <path d="M396 778h26v6h-26zM421 774l23 7-23 7z" fill="url(#ax)" />
            <text class="axis" x="398" y="728" fill="#0000e6">Y</text>
            <text class="axis" x="448" y="779" fill="#22b800">X</text>
          </svg>
        </div>
        <div class="info">
          <div class="phead"><h2>Служебная информация</h2><Ico n="pin" class="pin" /><span class="cls" /></div>
          <div class="msg"><p>Переопределение материала Нелин.сталь 11 (34) по описанию из документа.</p>
            <div class="spin"><svg width="16" height="25" fill="none" stroke="#505050" stroke-width="2"><path d="M4 9l4-4 4 4M4 17l4 4 4-4" /></svg></div>
          </div>
          <div class="btabs">
            <button class="nav" aria-label="В начало"><svg width="12" height="12" fill="#3f6cb0"><path d="M2 2h1v8H2zM9 2v8L4 6z" /></svg></button>
            <button class="nav" aria-label="Назад"><svg width="12" height="12" fill="#3f6cb0"><path d="M8 2v8L4 6z" /></svg></button>
            <button class="nav" aria-label="Вперёд"><svg width="12" height="12" fill="#3f6cb0"><path d="M5 2v8l4-4z" /></svg></button>
            <button class="nav" aria-label="В конец"><svg width="12" height="12" fill="#3f6cb0"><path d="M9 2h1v8H9zM3 2v8l5-4z" /></svg></button>
            <button class="btab">Процесс</button><button class="btab">Объёмы</button><button class="btab on">Ошибки</button>
          </div>
        </div>
      </section>

      <aside class="right">
        <div class="pane one">
          <div class="phead"><h2>Структура</h2><Ico n="pin" class="pin" /><span class="cls" /></div>
          <div class="ptools">
            <button aria-label="Структура"><Ico n="struct" /></button><i class="tri gap" />
            <button aria-label="Здание"><Ico n="house" /></button><button aria-label="Этажи"><Ico n="floors" /></button><i class="bsep" />
            <button aria-label="Добавить"><Ico n="meshAdd" /></button><i class="bsep" />
            <button aria-label="Поиск"><Ico n="binoc" /></button><button aria-label="Обновить"><Ico n="refresh" /></button>
          </div>
          <ul class="tree">
            <li v-for="(n, k) in structTree" :key="k" :class="{ bold: n.bold }" :style="{ paddingLeft: 2 + n.l * 19 + 'px' }">
              <svg width="19" height="18"><path :d="(n.l ? 'M9.500 0V9' : '') + (n.more ? 'M9.500 9V18' : '') + 'M9 9.500H19'" stroke="#666" stroke-dasharray="1 1" />
                <g v-if="n.b"><path d="M5.500 5.500h8v8h-8z" fill="#f4f4f4" stroke="#8a8a8a" /><path :d="n.b === '+' ? 'M7 9.500h5M9.500 7v5' : 'M7 9.500h5'" stroke="#2c5aa8" /></g>
              </svg>
              <Ico :n="n.i" /><span>{{ n.t }}</span>
            </li>
          </ul>
          <div class="ptabs"><button class="on"><Ico n="structTab" />Структура</button><button><Ico n="lib" />Библиотеки</button></div>
        </div>
        <div class="pane two">
          <div class="phead"><h2>Листы</h2><Ico n="pin" class="pin" /><span class="cls" /></div>
          <div class="ptools">
            <button v-for="n in ['sheetCfg', 'refresh', 'sheetAdd', 'sheetNum', 'sheetSync', 'up', 'down']" :key="n" :aria-label="n"><Ico :n="n" /></button>
          </div>
          <ul class="tree">
            <li v-for="(n, k) in sheetTree" :key="k" :class="{ bold: n.bold }" :style="{ paddingLeft: 2 + n.l * 19 + 'px' }">
              <svg width="19" height="18"><path :d="(n.l ? 'M9.500 0V9' : '') + 'M9 9.500H19'" stroke="#666" stroke-dasharray="1 1" />
                <g v-if="n.b"><path d="M5.500 5.500h8v8h-8z" fill="#f4f4f4" stroke="#8a8a8a" /><path d="M7 9.500h5" stroke="#2c5aa8" /></g>
              </svg>
              <Ico :n="n.i" /><span>{{ n.t }}</span>
            </li>
          </ul>
          <div class="ptabs"><button>Виды</button><button class="on">Листы</button></div>
        </div>
      </aside>
    </main>

    <div class="bottombar">
      <div class="strip">
        <i class="grip" />
        <template v-for="(b, k) in bar1" :key="k">
          <i v-if="b === '|'" class="bsep" /><span v-else-if="b === '_'" class="field" />
          <button v-else :class="{ on: b[0] === '+' }" :aria-label="b"><Ico :n="b.replace('+', '')" /></button>
        </template>
        <i class="over"><i class="tri" /></i>
      </div>
      <div class="strip second">
        <i class="grip" />
        <template v-for="(b, k) in bar2" :key="k">
          <i v-if="b === '|'" class="bsep" /><button v-else :aria-label="b"><Ico :n="b" /></button>
        </template>
        <label class="combo"><select v-model="floorSel" aria-label="Этаж"><option>1-й этаж</option></select><i class="dd"><i class="tri" /></i></label>
        <button aria-label="Слои"><Ico n="layers" /></button><i class="bsep" />
        <button aria-label="Номер загружения"><Ico n="loadNo" /></button>
        <label class="combo"><select v-model="loadSel" aria-label="Загружение"><option>4.Загружение прочее</option></select><i class="dd"><i class="tri" /></i></label>
        <button aria-label="Фильтр нагрузок"><Ico n="filterLoad" /></button><i class="bsep" />
        <button aria-label="Фильтр выбора"><Ico n="filterSel" /></button><button aria-label="Таблица"><Ico n="filterTab" /></button><i class="bsep" />
        <button aria-label="Проверка"><Ico n="houseCheck" /></button>
        <i class="over"><i class="tri" /></i>
      </div>
    </div>
    <footer class="status"><span class="grow">Укажите объект(ы) для редактирования</span><span class="num">NUM</span>
      <svg width="12" height="12" fill="#4a74b0"><path d="M8 0h2v2H8zM8 4h2v2H8zM8 8h2v2H8zM4 4h2v2H4zM4 8h2v2H4zM0 8h2v2H0z" /></svg>
    </footer>

    <dl class="tip">
      <div v-for="c in coords" :key="c.k" :class="{ b: c.b }"><dt>{{ c.k }} :</dt><dd :style="{ color: c.c }">{{ c.v }}</dd></div>
    </dl>
  </div>
</template>

<style>
body { margin: 0; }
</style>

<style scoped>
* { box-sizing: border-box; }
.app { position: relative; display: flex; flex-direction: column; min-height: 100vh; background: #bfdbff; border: 1px solid #667f9d; border-top: 0; border-right-width: 2px; font: 11px/16px "Open Sans", "Noto Sans", sans-serif; color: #15428b; white-space: nowrap; overflow: hidden; }
button { border: 0; padding: 0; margin: 0; background: none; font: inherit; color: inherit; display: flex; align-items: center; justify-content: center; flex: none; }
svg { flex: none; display: block; overflow: visible; }
h1, h2, p, ul, dl, dd { margin: 0; padding: 0; font: inherit; }
.grow { flex: 1; }
.tri { display: block; flex: none; width: 0; height: 0; border: 3px solid transparent; border-top-color: #4a74b0; border-bottom: 0; }
.tri.wide { border-width: 5px 5px 0; margin-right: 5px; }
.tri.pale { border-top-color: #fff; }
.tri.gap { margin: 0 3px; }

.title { position: relative; display: flex; align-items: center; height: 28px; background: #667588; border-top: 1px solid #7b889a; flex: none; }
.orb { position: absolute; left: 7px; top: 8px; width: 36px; height: 36px; border-radius: 50%; z-index: 2; background: radial-gradient(circle at 50% 30%, #fff, #dde3ea 60%, #a9b4c0); border: 1px solid #7c8896; }
.qat { display: flex; align-items: center; height: 20px; width: 192px; margin: 0 0 0 46px; padding-left: 9px; background: linear-gradient(#8e9aaa, #7d899b); border: 1px solid #94a0b0; border-radius: 4px 10px 10px 0; gap: 4px; }
.qat button { width: 18px; }
.qat button:nth-child(n + 8) { width: 20px; }
.more { margin-left: 7px; width: 10px; }
.more .tri { border-top-color: #12377c; border-width: 4px 3px 0; }
h1 { flex: 1; padding-left: 38px; text-align: center; color: #000; font-size: 12px; }
.wctl { display: flex; width: 138px; }
.wctl button { width: 46px; }

.tabs { display: flex; align-items: flex-end; height: 24px; padding-left: 51px; flex: none; }
.tab { height: 23px; }
.tab.on { background: linear-gradient(#fff, #e3edf9); border: 1px solid #8db2e3; border-bottom: 0; border-radius: 4px 4px 0 0; }
.menu { height: 24px; gap: 9px; margin-right: 8px; }
.menu.help { font: 700 17px/16px "Liberation Serif", serif; color: #3a4a66; gap: 6px; margin-right: 2px; }

.ribbonwrap { padding: 0 2px; border-bottom: 1px solid #6593cf; flex: none; }
.ribbon { display: flex; gap: 3px; height: 84px; border: 1px solid #8db2e3; border-radius: 4px; background: linear-gradient(#dce7f5 0 18%, #c7d7ed 20%, #d3e2f2 70%, #e3f4ff); padding-top: 1px; }
.group { display: flex; flex-direction: column; border: 1px solid #a3bfdb; border-radius: 3px; box-shadow: inset 1px 1px 0 #eef5fc; flex: none; margin-bottom: 1px; }
.gbody { display: flex; flex: 1; }
.group footer { height: 14px; line-height: 14px; text-align: center; background: #c1d8f0; color: #3e6aaa; }
.big { flex-direction: column; justify-content: flex-start; padding-top: 2px; }
.big span { margin-top: 3px; }
.big.off { color: #8d8d8d; }
.col { display: flex; flex-direction: column; gap: 4px; }
.col button { height: 26px; gap: 4px; }
.col .tri { margin-left: 1px; }
.col.rows { padding-left: 5px; align-items: flex-start; }
.col.pair button { align-self: center; }
.col.drop { padding-left: 5px; align-items: flex-start; }
.col.pair button.on { width: 34px; height: 29px; background: linear-gradient(#f8c48a, #f6b055 50%, #fbd887); border: 1px solid #c2a878; }
.split { background: linear-gradient(#f9c89c, #fbab60 20%, #f79238 34px, #fbc770 35px, #ffd870 60%, #ffefae); border: 1px solid #e0a94a; height: 64px; padding-top: 1px; border-radius: 2px; }
.split .tri { margin-top: 3px; }
.vsep { display: flex; justify-content: center; height: 56px; margin-top: 4px; }
.vsep::before { content: ""; width: 2px; background: #9ab8dc; border-right: 1px solid #fff; }
.blank { height: 35px; background: #f0f0f0; border-top: 1px solid #999; border-bottom: 1px solid #6fa2dc; flex: none; }

.work { flex: 1; display: flex; min-height: 0; }
.phead { display: flex; align-items: center; height: 21px; padding: 0 6px 2px 4px; background: #b7cce8; border-top: 1px solid #d4e3f4; flex: none; }
.phead h2 { flex: 1; }
.pin { margin-right: 8px; }
.cls { width: 8px; height: 8px; background: linear-gradient(45deg, transparent 43%, #4a74b0 43% 57%, transparent 57%), linear-gradient(-45deg, transparent 43%, #4a74b0 43% 57%, transparent 57%); }
.ptools { display: flex; align-items: center; height: 24px; background: linear-gradient(#e6f0ff, #b4d1fb); flex: none; }
.ptools button { width: 22px; }
.bsep { width: 2px; height: 14px; margin: 0 3px; background: #8db2e3; border-right: 1px solid #e9f2fd; flex: none; }

.left { display: flex; flex-direction: column; width: 230px; flex: none; }
.ptools.props { height: 23px; padding-left: 2px; }
.ptools.props .bsep { margin: 0 3px; }
.ptools.props button { width: 21px; }
.plist { flex: 1; background: linear-gradient(90deg, #fff 115px, #d4e3f2 115px 116px, #fff 116px); font: 11px/16px "Liberation Sans", sans-serif; color: #000; }
table { width: 100%; border-collapse: separate; border-spacing: 0; table-layout: fixed; }
.c1 { width: 116px; }
td { height: 17px; padding: 0 0 0 4px; border-bottom: 1px solid #cfe0f2; line-height: 16px; overflow: hidden; }
td:first-child { border-right: 1px solid #cfe0f2; }
tr .sw { display: block; float: left; width: 14px; height: 14px; border: 1px solid #000; margin: 1px 5px 0 -2px; }
.ro td { color: #6d6d6d; }
.grp th { height: 17px; padding: 0 0 0 4px; text-align: left; background: #d4e3f2; color: #9dbcdc; font-weight: 700; font-size: 12px; line-height: 17px; }
.child td:first-child { border-left: 17px solid #d4e3f2; }
.box { display: inline-block; width: 9px; height: 9px; margin-right: 9px; border: 1px solid #8a8a8a; background: linear-gradient(#f4f4f4 3px, #2c5aa8 3px 4px, #f4f4f4 4px); }
.desc { height: 53px; margin: 5px 0 1px; background: #d4e3f2; border: 1px solid #b5cfea; flex: none; }

.center { flex: 1; display: flex; flex-direction: column; margin: 0 7px 0 4px; min-width: 0; }
.dtabs { display: flex; align-items: center; height: 24px; padding: 2px 0 0 1px; background: linear-gradient(#b9d6ff, #e0ecff); flex: none; }
.dtab { height: 22px; align-items: center; background: linear-gradient(#b4d2f3, #9cc3ea); padding: 0 10px 0 10px; margin-left: -6px; clip-path: polygon(10px 0, 100% 0, 100% 100%, 0 100%); gap: 9px; color: #15316b; }
.dtab.on { font-weight: 700; background: linear-gradient(#b9f6ff 45%, #9cc6ee 55%, #a9cdf5); margin-left: 0; padding: 0 8px 0 24px; clip-path: polygon(22px 0, 100% 0, 100% 100%, 0 100%); color: #000; z-index: 1; }
.canvas { flex: 1; background: #e8e7d7; border: 2px solid #fff; border-top: 2px solid #6e6e6e; border-left: 1px solid #6e6e6e; margin-left: 3px; min-height: 300px; position: relative; overflow: hidden; }
.plot { position: absolute; inset: 0; }
.lab { font: italic 300 17px "Roboto", sans-serif; fill: #10106e; }
.cap { font: italic 300 23px "Roboto", sans-serif; fill: #10106e; }
.sub { font: italic 300 16px "Roboto", sans-serif; fill: #10106e; }
.axis { font: 700 15px "DejaVu Sans", sans-serif; }
.info { border-top: 6px solid #bfdbff; flex: none; }
.msg { display: flex; height: 27px; background: #fff; color: #000; font: 11px/18px "Liberation Sans", sans-serif; padding-left: 4px; }
.msg p { flex: 1; }
.spin { width: 16px; margin: 2px 2px 0 0; background: #f0f0f0; }
.btabs { display: flex; align-items: flex-start; height: 21px; background: linear-gradient(#7f9fcd, #9fb8df 30%); padding: 2px 0 0 3px; color: #000; }
.nav { width: 14px; height: 14px; background: #c5daf5; margin-right: 2px; }
.btab { height: 17px; padding: 0 11px 0 6px; background: linear-gradient(#e2eefc, #b9d2f2); border: 1px solid #6b8fc4; border-top: 0; clip-path: polygon(0 0, 100% 0, calc(100% - 12px) 100%, 0 100%); margin-right: -6px; }
.nav + .btab { margin-left: 2px; }
.btab.on { font-weight: 700; background: #fff; border: 0; padding: 0 18px 0 8px; }

.right { display: flex; flex-direction: column; width: 231px; flex: none; }
.pane { display: flex; flex-direction: column; }
.pane.one { flex: 476 0 0; }
.pane.two { flex: 459 0 0; margin-top: 6px; }
.pane .ptools { margin: 2px 2px 0; padding-left: 3px; }
.tree { flex: 1; list-style: none; background: #fff; border: 1px solid #7f8fa6; margin: 0 2px; color: #000; }
.tree li { display: flex; align-items: center; height: 18px; }
.tree span { margin-left: 4px; }
.bold { font-weight: 700; }
.ptabs { display: flex; height: 22px; margin-top: 1px; padding-left: 3px; border-top: 1px solid #8db2e3; }
.ptabs button { height: 19px; padding: 0 4px 0 1px; gap: 1px; margin-right: 5px; }
.ptabs button.on { background: linear-gradient(#d8e8fb, #f3f9ff); border: 1px solid #8db2e3; border-top: 0; border-radius: 0 0 4px 4px; }
.two .ptabs button { padding: 0 5px; }

.bottombar { display: flex; height: 26px; flex: none; }
.strip { display: flex; align-items: center; background: linear-gradient(#e3efff, #c4dcff 50%, #aecffa); padding-left: 3px; border-radius: 3px; }
.strip button { width: 22px; height: 22px; }
.strip button.on { width: 21px; margin-right: 1px; background: linear-gradient(#fdd08c, #fcc26a 50%, #ffe28e); border: 1px solid #8e8f8f; }
.grip { width: 3px; height: 15px; margin: 0 4px 0 0; background: repeating-linear-gradient(#6f95cc 0 2px, transparent 2px 5px); }
.strip.second { margin-left: 3px; }
.field { width: 74px; height: 15px; background: #f0f0f0; margin: 0 1px 0 3px; }
.over { display: flex; width: 10px; height: 26px; margin-left: 3px; background: linear-gradient(#c1d9fb, #6f9bd8); border-radius: 0 4px 4px 0; align-items: flex-end; justify-content: center; padding-bottom: 4px; }
.over .tri { border-top-color: #fff; border-top-width: 4px; }
.combo { display: flex; width: 146px; height: 18px; margin: 0 2px; background: #fff; }
.combo select { flex: 1; min-width: 0; appearance: none; border: 0; background: #fff; padding: 0 0 0 3px; font: inherit; color: #000; }
.dd { display: flex; align-items: center; justify-content: center; width: 14px; background: #c6dcf8; border: 1px solid #e9f2fd; }
.status { display: flex; align-items: center; height: 19px; border-top: 2px solid #6593cf; background: linear-gradient(#dbe9fb, #c0d9fa 40%, #b2cff5); padding-left: 3px; flex: none; }
.num { padding: 0 2px 0 6px; margin-right: 8px; font-size: 12px; border-left: 1px solid #7ba3da; border-right: 1px solid #7ba3da; }

.tip { position: absolute; right: -2px; bottom: 147px; width: 109px; height: 78px; padding: 3px 0 0 7px; background: #f0f0f0; border: 1px solid #fff; border-bottom: 2px solid #7b7b7b; box-shadow: 0 0 1px #888; color: #00008c; font: 12px/14px "Liberation Sans", sans-serif; }
.tip div { display: flex; }
.tip div:nth-child(-n + 3) { border-left: 1px solid #999; }
.tip div:nth-child(n + 4) { padding-left: 1px; }
.tip dt { width: 22px; text-align: right; }
.tip dd { margin-left: 6px; }
.tip .b dt { font-weight: 700; }
</style>
